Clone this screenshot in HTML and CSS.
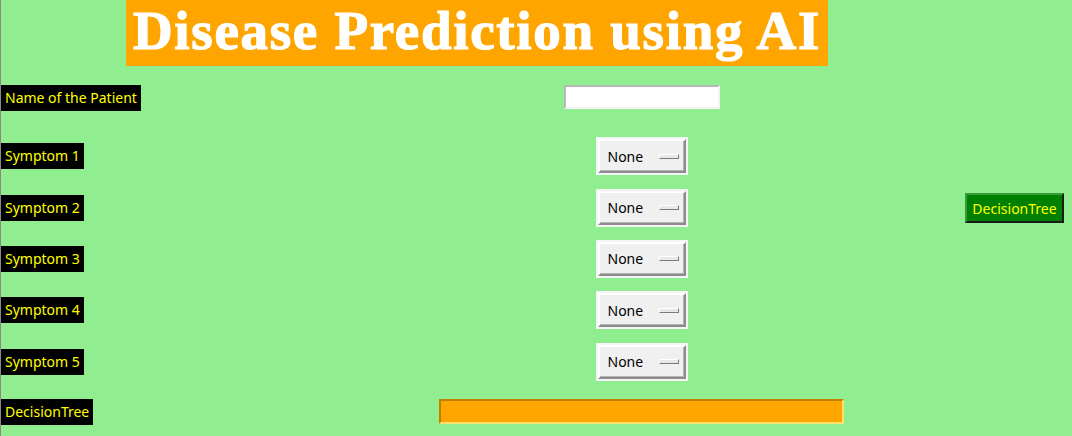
FILE: index.html
```html
<!DOCTYPE html>
<html>
<head>
<meta charset="utf-8">
<title>Disease Prediction using AI</title>
<link rel="stylesheet" href="styles.css">
</head>
<body>
<div class="window">
  <div class="title-row">
    <h1 class="title">Disease Prediction using AI</h1>
  </div>
  <div class="grid">
    <div class="label r1">Name of the Patient</div>
    <div class="center r1"><input class="entry" type="text"></div>

    <div class="label r2">Symptom 1</div>
    <div class="center r2"><div class="menu"><div class="menu-btn"><span class="menu-text">None</span><span class="indicator"></span></div></div></div>

    <div class="label r3">Symptom 2</div>
    <div class="center r3"><div class="menu"><div class="menu-btn"><span class="menu-text">None</span><span class="indicator"></span></div></div></div>
    <div class="side r3"><button class="dt-btn">DecisionTree</button></div>

    <div class="label r4">Symptom 3</div>
    <div class="center r4"><div class="menu"><div class="menu-btn"><span class="menu-text">None</span><span class="indicator"></span></div></div></div>

    <div class="label r5">Symptom 4</div>
    <div class="center r5"><div class="menu"><div class="menu-btn"><span class="menu-text">None</span><span class="indicator"></span></div></div></div>

    <div class="label r6">Symptom 5</div>
    <div class="center r6"><div class="menu"><div class="menu-btn"><span class="menu-text">None</span><span class="indicator"></span></div></div></div>

    <div class="label r7">DecisionTree</div>
    <div class="center r7"><div class="result"></div></div>
  </div>
</div>
</body>
</html>
```
FILE: styles.css
```css
html, body {
  margin: 0;
  padding: 0;
  background: #90ee90;
}
.window {
  width: 1071px;
  height: 436px;
  border-left: 1px solid #8a8a8a;
  background: #90ee90;
  overflow: hidden;
  font-family: "Noto Sans", "Open Sans", sans-serif;
}
.title-row {
  display: flex;
  padding-left: 125px;
  height: 66px;
}
.title {
  margin: 0;
  width: 702px;
  height: 66px;
  background: #ffa500;
  color: #ffffff;
  font-family: "Liberation Serif", serif;
  font-weight: bold;
  font-size: 55px;
  line-height: 62px;
  text-align: center;
  letter-spacing: 1.7px;
  -webkit-text-stroke: 1.2px #ffffff;
  white-space: nowrap;
}
.grid {
  display: grid;
  grid-template-columns: 438px 405px 1fr;
  grid-template-rows: 64px 52px 51px 51px 52px 51px 49px;
}
.r1 { grid-row: 1; }
.r2 { grid-row: 2; }
.r3 { grid-row: 3; }
.r4 { grid-row: 4; }
.r5 { grid-row: 5; }
.r6 { grid-row: 6; }
.r7 { grid-row: 7; }
.label {
  grid-column: 1;
  justify-self: start;
  align-self: center;
  background: #000000;
  color: #ffff00;
  font-size: 14px;
  line-height: 20px;
  padding: 3px 4px 3px 4px;
  white-space: nowrap;
}
.center {
  grid-column: 2;
  display: flex;
  justify-content: center;
  align-items: center;
}
.side {
  grid-column: 3;
  display: flex;
  align-items: center;
  padding-left: 121px;
}
.entry {
  box-sizing: border-box;
  width: 156px;
  height: 24px;
  margin: 0 0 2px 0;
  background: #ffffff;
  border: 2px solid;
  border-color: #b8b8b8 #f4f4f4 #f4f4f4 #b8b8b8;
  padding: 0;
  outline: none;
}
.menu {
  box-sizing: border-box;
  width: 92px;
  height: 38px;
  background: #f5f5f5;
  padding: 2px;
}
.menu-btn {
  box-sizing: border-box;
  height: 100%;
  background: #f0f0f0;
  border: 2px solid;
  border-color: #ffffff #8c8c8c #8c8c8c #ffffff;
  box-shadow: inset -1px -1px 0 #b4b4b4;
  display: flex;
  align-items: center;
  padding-left: 8px;
}
.menu-text {
  font-size: 14px;
  color: #000000;
  width: 51px;
}
.indicator {
  box-sizing: border-box;
  width: 20px;
  height: 5px;
  background: #e8e8e8;
  border: 1px solid;
  border-color: #ffffff #7a7a7a #7a7a7a #ffffff;
}
.dt-btn {
  box-sizing: border-box;
  width: 99px;
  height: 30px;
  background: #008000;
  color: #ffff00;
  font-family: "Noto Sans", "Open Sans", sans-serif;
  font-size: 14px;
  border: 2px solid;
  border-color: #3a9a3a #1a1a1a #1a1a1a #3a9a3a;
  padding: 0;
  margin-top: 1px;
}
.result {
  box-sizing: border-box;
  width: 405px;
  height: 25px;
  background: #ffa500;
  border: 2px solid;
  border-color: #c07f00 #ffe070 #ffe070 #c07f00;
}
```
